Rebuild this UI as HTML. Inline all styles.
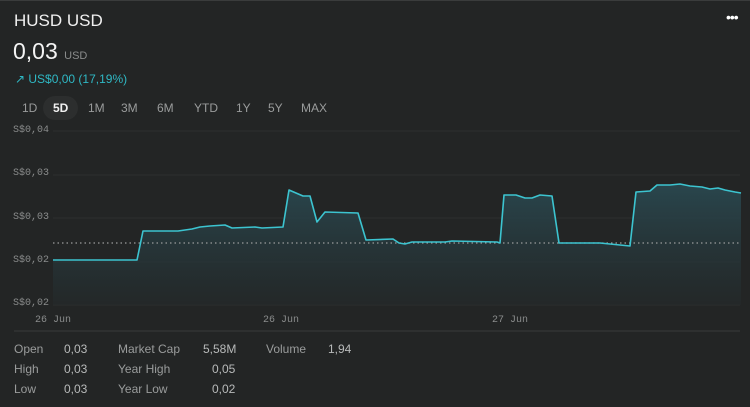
<!DOCTYPE html>
<html><head><style>
body{margin:0;background:#232525;width:750px;height:407px;overflow:hidden;font-family:"Liberation Sans",sans-serif;color:#e8e8e8;position:relative}
.t{position:absolute;white-space:nowrap}
.mono{font-family:"Liberation Mono",monospace;font-size:10px;color:#8a8c8c}
.tab{position:absolute;top:101px;font-size:12px;color:#9a9c9c}
.st{position:absolute;font-size:12px;color:#9a9c9c}
.sv{position:absolute;font-size:12px;color:#b8baba}
</style></head><body>
<div style="position:absolute;left:0;top:0;width:750px;height:1px;background:#3a3c3c"></div>
<div class="t" style="left:14px;top:11px;font-size:17px;color:#f0f0f0">HUSD USD</div>
<div class="t" style="left:13px;top:38px;font-size:23px;color:#f4f4f4">0,03 <span style="font-size:11px;color:#8a8c8c">USD</span></div>
<div class="t" style="left:15px;top:72px;font-size:12px;color:#2fb8c4">↗ US$0,00 (17,19%)</div>
<div class="t" style="left:726px;top:9px;font-size:14px;color:#fff;letter-spacing:-1px">•••</div>
<div style="position:absolute;left:43px;top:96px;width:35px;height:24px;border-radius:12px;background:#2c2e2e"></div>
<div class="tab" style="left:22px">1D</div>
<div class="tab" style="left:53px;color:#f0f0f0;font-weight:bold">5D</div>
<div class="tab" style="left:88px">1M</div>
<div class="tab" style="left:121px">3M</div>
<div class="tab" style="left:157px">6M</div>
<div class="tab" style="left:194px">YTD</div>
<div class="tab" style="left:236px">1Y</div>
<div class="tab" style="left:268px">5Y</div>
<div class="tab" style="left:301px">MAX</div>
<div class="t mono" style="left:13px;top:125px">S$0,04</div>
<div class="t mono" style="left:13px;top:168px">S$0,03</div>
<div class="t mono" style="left:13px;top:212px">S$0,03</div>
<div class="t mono" style="left:13px;top:255px">S$0,02</div>
<div class="t mono" style="left:13px;top:298px">S$0,02</div>
<div class="t mono" style="left:35px;top:315px">26 Jun</div>
<div class="t mono" style="left:263px;top:315px">26 Jun</div>
<div class="t mono" style="left:492px;top:315px">27 Jun</div>
<svg style="position:absolute;left:0;top:0" width="750" height="407">
<defs><linearGradient id="g" x1="0" y1="0" x2="0" y2="1"><stop offset="0" stop-color="#2a4a52" stop-opacity=".9"/><stop offset="1" stop-color="#242a2b" stop-opacity=".6"/></linearGradient></defs>
<g stroke="#2d2f2f" stroke-width="1"><line x1="53" y1="131" x2="740" y2="131"/><line x1="53" y1="175" x2="740" y2="175"/><line x1="53" y1="218" x2="740" y2="218"/><line x1="53" y1="262" x2="740" y2="262"/><line x1="53" y1="305" x2="740" y2="305"/></g>
<line x1="14" y1="331" x2="740" y2="331" stroke="#3a3c3c"/>
<polygon fill="url(#g)" points="53,260 137,260 143,231 178,231 192,229 200,227 210,226 225,225 232,228 255,227 262,228 283,227 289,190 303,196 310,196 317,222 325,212 358,213 366,240 393,239 399,243 405,244 412,242 445,242 452,241 497,242 500,243 504,195 516,195 525,198 532,198 540,195 552,196 559,243 600,243 620,245 630,246 636,192 650,191 657,185 670,185 680,184 690,186 702,187 710,189 718,188 725,190 735,192 741,193 741,305 53,305"/>
<line x1="53" y1="243" x2="740" y2="243" stroke="#9a9c9c" stroke-width="1.2" stroke-dasharray="1.5 3"/>
<polyline fill="none" stroke="#3cc4d0" stroke-width="1.6" stroke-linejoin="round" points="53,260 137,260 143,231 178,231 192,229 200,227 210,226 225,225 232,228 255,227 262,228 283,227 289,190 303,196 310,196 317,222 325,212 358,213 366,240 393,239 399,243 405,244 412,242 445,242 452,241 497,242 500,243 504,195 516,195 525,198 532,198 540,195 552,196 559,243 600,243 620,245 630,246 636,192 650,191 657,185 670,185 680,184 690,186 702,187 710,189 718,188 725,190 735,192 741,193"/>
</svg>
<div class="st" style="left:14px;top:342px">Open</div><div class="sv" style="left:64px;top:342px">0,03</div>
<div class="st" style="left:14px;top:362px">High</div><div class="sv" style="left:64px;top:362px">0,03</div>
<div class="st" style="left:14px;top:382px">Low</div><div class="sv" style="left:64px;top:382px">0,03</div>
<div class="st" style="left:118px;top:342px">Market Cap</div><div class="sv" style="left:203px;top:342px">5,58M</div>
<div class="st" style="left:118px;top:362px">Year High</div><div class="sv" style="left:212px;top:362px">0,05</div>
<div class="st" style="left:118px;top:382px">Year Low</div><div class="sv" style="left:212px;top:382px">0,02</div>
<div class="st" style="left:266px;top:342px">Volume</div><div class="sv" style="left:328px;top:342px">1,94</div>
</body></html>
